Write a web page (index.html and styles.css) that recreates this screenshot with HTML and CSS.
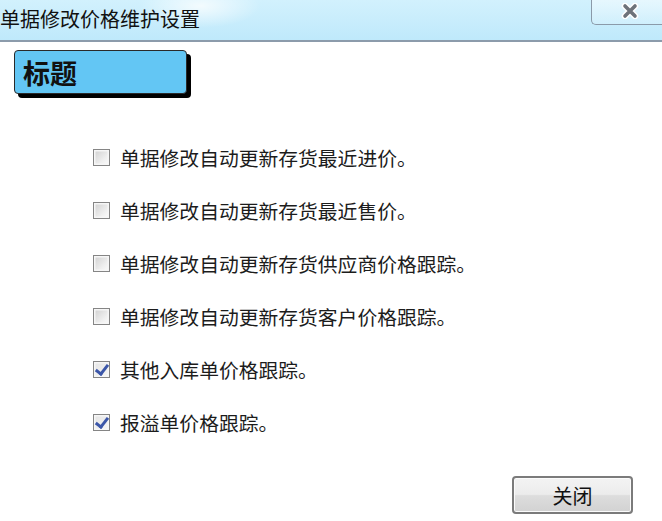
FILE: index.html
```html
<!DOCTYPE html>
<html lang="zh-CN">
<head>
<meta charset="UTF-8">
<title>单据修改价格维护设置</title>
<link rel="stylesheet" href="styles.css">
</head>
<body>
<div class="window">
  <div class="titlebar">
    <span class="title">单据修改价格维护设置</span>
    <button class="close" type="button">
      <svg width="18" height="16" viewBox="0 0 18 16">
        <path d="M4 3 L14 13 M14 3 L4 13" stroke="#fff" stroke-width="6.5" stroke-linecap="round"/>
        <path d="M4 3 L14 13 M14 3 L4 13" stroke="#6e737a" stroke-width="3.6" stroke-linecap="round"/>
      </svg>
    </button>
  </div>

  <div class="content">
    <div class="caption"><b>标题</b></div>

    <ul class="options">
      <li><span class="check"></span>单据修改自动更新存货最近进价。</li>
      <li><span class="check"></span>单据修改自动更新存货最近售价。</li>
      <li><span class="check"></span>单据修改自动更新存货供应商价格跟踪。</li>
      <li><span class="check"></span>单据修改自动更新存货客户价格跟踪。</li>
      <li><span class="check checked"></span>其他入库单价格跟踪。</li>
      <li><span class="check checked"></span>报溢单价格跟踪。</li>
    </ul>

    <div class="actions">
      <button class="btn" type="button">关闭</button>
    </div>
  </div>
</div>
</body>
</html>
```

FILE: styles.css
```css
*{
    box-sizing:border-box;
    padding:0;
    margin:0;
}
body{
    font-family:"Noto Sans CJK SC", "Noto Sans", sans-serif;
    background:#fff;
    color:#1c1c1c;
    width:662px;
    height:521px;
    overflow:hidden;
}
.window{
    display:flex;
    flex-direction:column;
    height:521px;
}
.titlebar{
    display:flex;
    align-items:flex-start;
    height:42px;
    flex-shrink:0;
    border-bottom:2px solid #8c9bab;
    background:
        radial-gradient(ellipse 60px 22px at 200px 6px, rgba(255,255,255,0.75), rgba(255,255,255,0)),
        linear-gradient(#d2f1fd, #bfe9fb);
}
.title{
    font-size:20px;
    line-height:38px;
    color:#111;
    white-space:nowrap;
}
.close{
    margin-left:auto;
    margin-right:-2px;
    width:73px;
    height:25px;
    border:1px solid #8b9aa9;
    border-top:none;
    border-right:none;
    border-bottom-left-radius:5px;
    background:linear-gradient(rgba(255,255,255,0.45), rgba(255,255,255,0.15));
    display:flex;
    align-items:center;
    justify-content:center;
    padding-left:4px;
    padding-bottom:2px;
}
.content{
    flex:1;
    display:flex;
    flex-direction:column;
    padding:8px 0 7px 14px;
}
.caption{
    width:173px;
    height:44px;
    border:1px solid #2a2a2a;
    border-radius:4px;
    background:#63c6f4;
    box-shadow:4px 4px 0 #000;
    padding-left:8px;
    display:flex;
    align-items:center;
}
.caption b{
    font-size:27px;
    font-weight:bold;
    color:#111;
    line-height:1;
}
.options{
    list-style:none;
    margin-top:51px;
    margin-left:79px;
    display:flex;
    flex-direction:column;
    gap:29px;
}
.options li{
    display:flex;
    align-items:center;
    height:24px;
    font-size:19.8px;
    white-space:nowrap;
}
.check{
    width:17px;
    height:17px;
    border:1.5px solid #858585;
    background:linear-gradient(135deg, #cfcfcf, #efefef 65%, #fcfcfc);
    box-shadow:inset 0 0 0 1.5px #f6f6f6;
    margin-right:10px;
    flex-shrink:0;
    display:flex;
    align-items:center;
    justify-content:center;
}
.check.checked{
    background:linear-gradient(135deg, #e4e4e4, #f6f6f6);
}
.check.checked::after{
    content:'';
    width:5px;
    height:10px;
    border-right:3px solid #3b56a8;
    border-bottom:3px solid #3b56a8;
    transform:translate(0,-1px) rotate(38deg);
}
.actions{
    margin-top:auto;
    display:flex;
    justify-content:flex-end;
    padding-right:29px;
}
.btn{
    width:121px;
    height:38px;
    border:2px solid #7b7b7b;
    border-radius:4px;
    background:linear-gradient(#f3f3f3 0%, #ececec 48%, #dddddd 52%, #d2d2d2 100%);
    box-shadow:inset 0 0 0 1px #fbfbfb;
    font-family:"Noto Sans CJK SC", sans-serif;
    font-size:20px;
    color:#111;
}
```
